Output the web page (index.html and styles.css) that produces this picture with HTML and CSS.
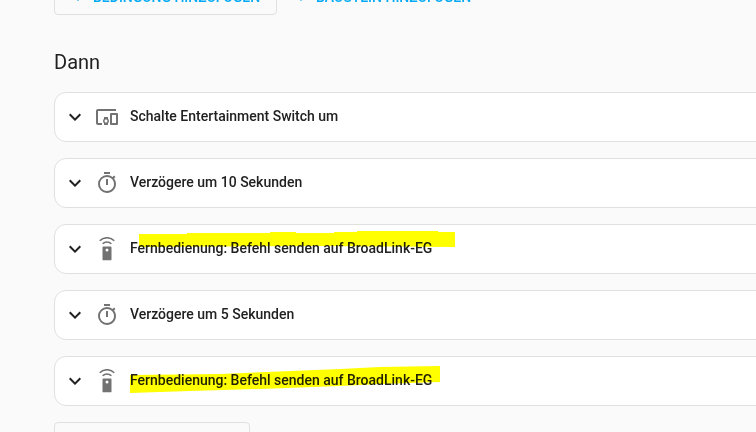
FILE: index.html
```html
<!DOCTYPE html>
<html lang="de">
<head>
<meta charset="utf-8">
<title>Dann</title>
<link rel="stylesheet" href="styles.css">
</head>
<body>
<div class="page">
  <div class="buttons top">
    <div class="btn outlined"><span class="plus">+</span>BEDINGUNG HINZUFÜGEN</div>
    <div class="btn text"><span class="plus">+</span>BAUSTEIN HINZUFÜGEN</div>
  </div>
  <h2 class="title">Dann</h2>
  <div class="list">
    <div class="card">
      <svg class="chev" viewBox="0 0 24 24"><path d="M7.41 8.58 12 13.17l4.59-4.59L18 10l-6 6-6-6z"/></svg>
      <svg class="icon" viewBox="0 0 24 24"><path d="M3 6h18V4H3c-1.1 0-2 .9-2 2v12c0 1.1.9 2 2 2h4v-2H3V6zm10 6H9v1.78c-.61.55-1 1.33-1 2.22s.39 1.67 1 2.22V20h4v-1.78c.61-.55 1-1.34 1-2.22s-.39-1.67-1-2.22V12zm-2 5.5c-.83 0-1.5-.67-1.5-1.5s.67-1.5 1.5-1.5 1.5.67 1.5 1.5-.67 1.5-1.5 1.5zM22 8h-6c-.5 0-1 .5-1 1v10c0 .5.5 1 1 1h6c.5 0 1-.5 1-1V9c0-.5-.5-1-1-1zm-1 10h-4v-8h4v8z"/></svg>
      <span class="label">Schalte Entertainment Switch um</span>
    </div>
    <div class="card">
      <svg class="chev" viewBox="0 0 24 24"><path d="M7.41 8.58 12 13.17l4.59-4.59L18 10l-6 6-6-6z"/></svg>
      <svg class="icon" viewBox="0 0 24 24"><path d="M15 1H9v2h6V1zm-4 13h2V8h-2v6zm8.03-6.61 1.42-1.42c-.43-.51-.9-.99-1.41-1.41l-1.42 1.42A8.962 8.962 0 0 0 12 4a9 9 0 0 0-9 9 9 9 0 0 0 9 9c5 0 9-4.03 9-9 0-2.12-.74-4.07-1.97-5.61zM12 20c-3.87 0-7-3.13-7-7s3.13-7 7-7 7 3.13 7 7-3.13 7-7 7z"/></svg>
      <span class="label">Verzögere um 10 Sekunden</span>
    </div>
    <div class="card">
      <svg class="chev" viewBox="0 0 24 24"><path d="M7.41 8.58 12 13.17l4.59-4.59L18 10l-6 6-6-6z"/></svg>
      <svg class="icon" viewBox="0 0 24 24"><path class="wave" d="M4.7 3.7A10.4 10.4 0 0 1 19.3 3.7M7.6 6.8A6.3 6.3 0 0 1 16.4 6.8"/><path d="M15.6 9.5H8.4c-.5 0-.9.4-.9.9v12c0 .5.4.9.9.9h7.2c.5 0 .9-.4.9-.9v-12c0-.5-.4-.9-.9-.9zM12 14.6a1.5 1.5 0 1 1 0-3 1.5 1.5 0 0 1 0 3z"/></svg>
      <span class="label">Fernbedienung: Befehl senden auf BroadLink-EG</span>
      <svg class="mark mark-a" viewBox="0 0 316 16"><polygon points="0,3 48,3 48,2 131,2 131,1 157,1 157,2 195,2 195,1 218,1 218,0 299,0 299,1 316,1 316,16 180,15 0,16"/></svg>
    </div>
    <div class="card">
      <svg class="chev" viewBox="0 0 24 24"><path d="M7.41 8.58 12 13.17l4.59-4.59L18 10l-6 6-6-6z"/></svg>
      <svg class="icon" viewBox="0 0 24 24"><path d="M15 1H9v2h6V1zm-4 13h2V8h-2v6zm8.03-6.61 1.42-1.42c-.43-.51-.9-.99-1.41-1.41l-1.42 1.42A8.962 8.962 0 0 0 12 4a9 9 0 0 0-9 9 9 9 0 0 0 9 9c5 0 9-4.03 9-9 0-2.12-.74-4.07-1.97-5.61zM12 20c-3.87 0-7-3.13-7-7s3.13-7 7-7 7 3.13 7 7-3.13 7-7 7z"/></svg>
      <span class="label">Verzögere um 5 Sekunden</span>
    </div>
    <div class="card">
      <svg class="chev" viewBox="0 0 24 24"><path d="M7.41 8.58 12 13.17l4.59-4.59L18 10l-6 6-6-6z"/></svg>
      <svg class="icon" viewBox="0 0 24 24"><path class="wave" d="M4.7 3.7A10.4 10.4 0 0 1 19.3 3.7M7.6 6.8A6.3 6.3 0 0 1 16.4 6.8"/><path d="M15.6 9.5H8.4c-.5 0-.9.4-.9.9v12c0 .5.4.9.9.9h7.2c.5 0 .9-.4.9-.9v-12c0-.5-.4-.9-.9-.9zM12 14.6a1.5 1.5 0 1 1 0-3 1.5 1.5 0 0 1 0 3z"/></svg>
      <span class="label">Fernbedienung: Befehl senden auf BroadLink-EG</span>
      <svg class="mark mark-b" viewBox="0 0 310 27"><polygon points="0,9 90,8 210,3 250,1 310,0 310,16 250,18 210,20 130,23 60,25 0,27"/></svg>
    </div>
  </div>
  <div class="buttons bottom">
    <div class="btn outlined short"></div>
  </div>
</div>
</body>
</html>
```

FILE: styles.css
```css
* { box-sizing: border-box; }
html, body { margin: 0; height: 100%; overflow: hidden; }
body {
  background: #fafafa;
  color: #212121;
  font-family: Roboto, "Liberation Sans", sans-serif;
}
.page {
  width: 756px;
  height: 432px;
  overflow: hidden;
  padding-left: 54px;
}
.buttons { display: flex; align-items: center; gap: 8px; }
.top { height: 36px; margin-top: -21px; }
.btn {
  height: 36px;
  display: flex;
  align-items: center;
  font-size: 14px;
  font-weight: 500;
  letter-spacing: 0;
  color: #03a9f4;
  white-space: nowrap;
}
.outlined {
  width: 223px;
  padding-left: 14px;
  border: 1px solid #e0e0e0;
  border-radius: 4px;
}
.text { padding-left: 7px; }
.plus { width: 18px; margin-right: 6px; font-weight: 400; text-align: center; }
.title {
  margin: 35px 0 0;
  height: 24px;
  font-size: 20px;
  font-weight: 400;
  line-height: 24px;
  letter-spacing: 0;
}
.list {
  margin-top: 18px;
  display: flex;
  flex-direction: column;
  gap: 16px;
  width: 720px;
}
.card {
  position: relative;
  height: 50px;
  display: flex;
  align-items: center;
  padding-left: 8px;
  background: #fff;
  border: 1px solid #e0e0e0;
  border-radius: 12px;
}
.chev { width: 24px; height: 24px; fill: #212121; flex: none; }
.icon { width: 24px; height: 24px; margin-left: 8px; fill: #727272; flex: none; }
.wave { fill: none; stroke: #727272; stroke-width: 1.5; }
.label {
  margin-left: 11px;
  padding-bottom: 2px;
  font-size: 14px;
  font-weight: 500;
  line-height: 20px;
  white-space: nowrap;
  position: relative;
  z-index: 1;
}
.mark { position: absolute; fill: #ffff00; mix-blend-mode: multiply; z-index: 2; }
.mark-a { left: 84px; top: 6px; width: 316px; height: 16px; }
.mark-b { left: 75px; top: 9px; width: 310px; height: 27px; }
.bottom { margin-top: 16px; }
.short { width: 196px; }
```
